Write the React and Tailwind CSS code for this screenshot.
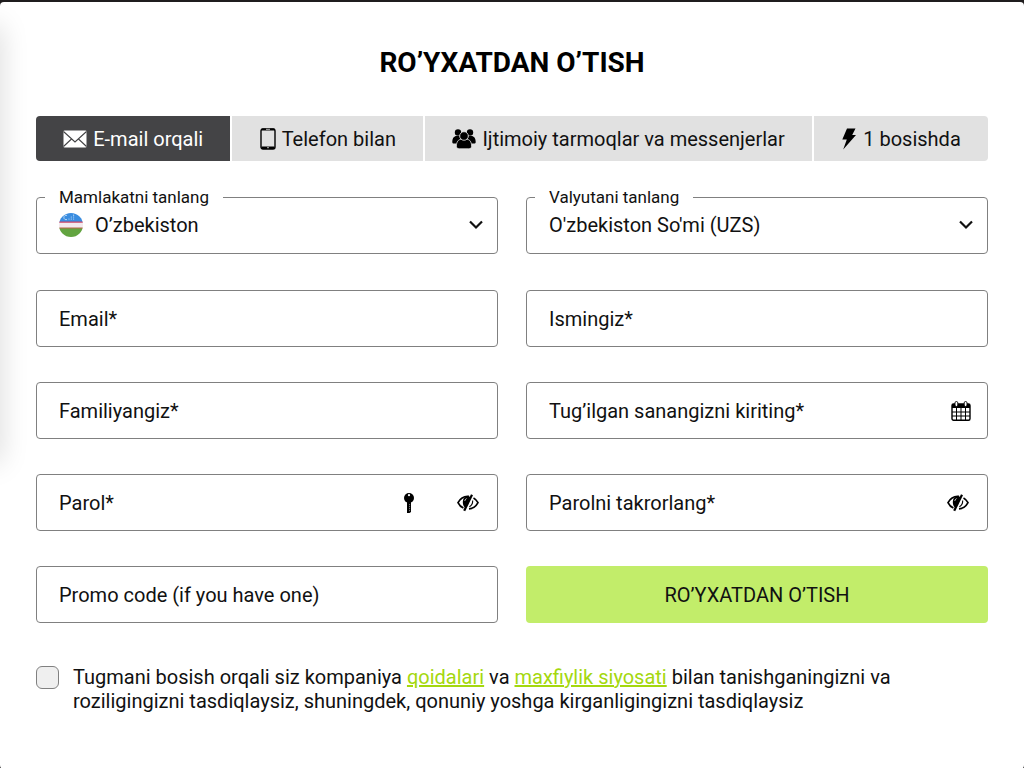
import React, { useState } from 'react';

const MailIcon = () => (
  <svg width="24" height="18" viewBox="0 0 24 18" aria-hidden="true">
    <rect x="0.5" y="0.5" width="23" height="17" rx="1" fill="#fff" />
    <path d="M0.5 1.5 12 12 23.5 1.5M0.5 16.5 8.5 9M23.5 16.5 15.5 9" fill="none" stroke="#444446" strokeWidth="1.1" />
  </svg>
);

const PhoneIcon = () => (
  <svg width="16" height="22" viewBox="0 0 16 22" aria-hidden="true">
    <rect x="1" y="1" width="14" height="20" rx="2" fill="none" stroke="#000" strokeWidth="1.4" />
    <path d="M1.5 1.6h13" stroke="#000" strokeWidth="2" />
    <path d="M1.5 19.8h13" stroke="#000" strokeWidth="2.6" />
    <path d="M6 1.3h4M7 19.7h2" stroke="#e1e1e1" strokeWidth="0.8" />
  </svg>
);

const PeopleIcon = () => (
  <svg width="24" height="20" viewBox="0 0 24 20" aria-hidden="true">
    <circle cx="6" cy="3.5" r="3.2" />
    <circle cx="18" cy="3.5" r="3.2" />
    <path d="M0.3 13c0-3.8 1.7-6 4.4-6h2.8l2 7.5H2C.9 14.5.3 14 .3 13ZM23.7 13c0-3.8-1.7-6-4.4-6h-2.8l-2 7.5H22c1.1 0 1.7-.5 1.7-1.5Z" />
    <g stroke="#e1e1e1" strokeWidth="0.8">
      <path d="M4.4 17.3c0-4.6 2-7 5-7h5.2c3 0 5 2.4 5 7 0 1.600-1.200 2.500-2.800 2.500H7.200c-1.600 0-2.800-.9-2.800-2.500Z" />
      <circle cx="12" cy="7" r="4.3" />
    </g>
  </svg>
);

const BoltIcon = () => (
  <svg width="16" height="22" viewBox="0 0 16 22" aria-hidden="true">
    <path d="M6 0.5h8.500L11.200 7H15L2.200 21.500 5.800 11.600H1.300L6 0.500Z" />
  </svg>
);

const UzFlag = () => (
  <svg width="24" height="24" viewBox="0 0 24 24" aria-hidden="true">
    <defs>
      <clipPath id="uz-circle">
        <circle cx="12" cy="12" r="12" />
      </clipPath>
    </defs>
    <g clipPath="url(#uz-circle)">
      <path fill="#3a8de0" d="M0 0h24v9H0z" />
      <path fill="#f3eaee" d="M0 9h24v6H0z" />
      <path fill="#62a440" d="M0 15h24v9H0z" />
      <path fill="#c84468" d="M0 8.500h24v1.200H0z" />
      <path fill="#b8664a" d="M0 14.500h24v1H0z" />
      <path d="M8 2.500a2.200 2.200 0 1 0 0 4" fill="none" stroke="#c4dff8" strokeWidth="0.9" />
      <g fill="#c4dff8">
        <circle cx="10" cy="6" r="0.6" />
        <circle cx="12.3" cy="6" r="0.6" />
        <circle cx="14.6" cy="6" r="0.6" />
        <circle cx="12.3" cy="4" r="0.6" />
        <circle cx="14.6" cy="4" r="0.6" />
        <circle cx="14.6" cy="2.2" r="0.6" />
      </g>
    </g>
  </svg>
);

const ChevronIcon = () => (
  <svg width="14" height="10" viewBox="0 0 14 10" aria-hidden="true" className="pointer-events-none -ml-7 mr-3.5 shrink-0">
    <path d="M1 1.5 7 7.5 13 1.5" fill="none" stroke="#111" strokeWidth="2.2" />
  </svg>
);

const CalendarIcon = () => (
  <svg width="20" height="20" viewBox="0 0 20 20" aria-hidden="true">
    <rect x="1" y="3" width="18" height="16.3" rx="1.5" fill="#fff" stroke="#000" strokeWidth="1.4" />
    <path d="M1 3h18v4H1z" />
    <path d="M1 11h18M1 15h18M5.5 7v12M10 7v12M14.5 7v12" stroke="#000" strokeWidth="1" />
    <rect x="4" y="0.5" width="2.8" height="5" rx="1.4" fill="#fff" stroke="#000" strokeWidth="0.9" />
    <rect x="13.2" y="0.5" width="2.8" height="5" rx="1.4" fill="#fff" stroke="#000" strokeWidth="0.9" />
  </svg>
);

const KeyIcon = () => (
  <svg width="12" height="22" viewBox="0 0 12 22" aria-hidden="true">
    <circle cx="6" cy="6" r="5" />
    <circle cx="6" cy="3.2" r="1.1" fill="#fff" />
    <path d="M4 9h4v11L6.500 21H4z" />
    <path d="M6.600 12v8" stroke="#fff" strokeWidth="0.5" strokeDasharray="1.2 0.8" />
  </svg>
);

const EyeOffIcon = () => (
  <svg width="22" height="18" viewBox="0 0 22 18" aria-hidden="true">
    <path d="M12 2.4C6.800 1.800 3 5 1 8.600c1.200 2.500 3 4.400 5.400 5.500M16.500 4c1.900 1.100 3.400 2.700 4.500 4.700-2 3.700-5 6-9 6.200" fill="none" stroke="#000" strokeWidth="1.7" />
    <path d="M15 0.800 7.200 16.800" stroke="#000" strokeWidth="2.200" />
    <path d="M13.500 3 8.300 14C5.600 12 5 7 7 3.800c2-1.400 4-1.500 6.500-.8Z" />
    <path d="M7.800 6.800c.2-1 .8-1.800 1.700-2.200" fill="none" stroke="#fff" strokeWidth="0.9" />
    <path d="M15.700 6.500c.1 2.800-1.100 5-3.300 6.300" fill="none" stroke="#000" strokeWidth="1.1" />
  </svg>
);

const tabs = [
  { id: 'email', label: 'E-mail orqali', Icon: MailIcon },
  { id: 'phone', label: 'Telefon bilan', Icon: PhoneIcon },
  { id: 'social', label: 'Ijtimoiy tarmoqlar va messenjerlar', Icon: PeopleIcon },
  { id: 'click', label: '1 bosishda', Icon: BoltIcon },
];

const SelectField = ({ id, label, icon, options }) => (
  <fieldset className="min-w-0 rounded border border-[#808080] pl-[22px]">
    <legend className="-ml-[14px] px-[14px] text-[17px] leading-6">
      <label htmlFor={id}>{label}</label>
    </legend>
    <div className="flex h-11 items-center pb-3">
      {icon}
      <select
        id={id}
        className={`h-8 min-w-0 flex-1 appearance-none bg-transparent outline-none ${icon ? 'pl-3' : ''}`}
      >
        {options.map((option) => (
          <option key={option}>{option}</option>
        ))}
      </select>
      <ChevronIcon />
    </div>
  </fieldset>
);

const TextField = ({ label, type = 'text', children }) => (
  <div className="flex h-[57px] items-center rounded border border-[#808080] pl-[22px] pr-4">
    <input
      type={type}
      aria-label={label}
      placeholder={label}
      className="h-full min-w-0 flex-1 bg-transparent outline-none placeholder:text-[#111]"
    />
    {children}
  </div>
);

const EyeButton = () => (
  <button type="button" aria-label="Parolni ko‘rsatish" className="mr-0.5 cursor-pointer">
    <EyeOffIcon />
  </button>
);

export default function App() {
  const [activeTab, setActiveTab] = useState('email');
  const [agreed, setAgreed] = useState(false);

  return (
    <div className="min-h-screen bg-[#1f1d1e] pt-0.5 font-['Roboto',sans-serif] text-xl text-[#111]">
      <main className="relative min-h-[calc(100vh-2px)] overflow-hidden rounded bg-white px-9 pb-14 pt-10">
        <div className="pointer-events-none absolute -left-5 top-6 h-[436px] w-5 shadow-[0_0_28px_rgba(0,0,0,0.17)]" />
        <h1 className="text-center text-[28px] font-bold leading-[42px] text-black">RO’YXATDAN O’TISH</h1>

        <div role="tablist" className="mt-8 flex gap-0.5 overflow-hidden rounded">
          {tabs.map(({ id, label, Icon }) => (
            <button
              key={id}
              type="button"
              role="tab"
              aria-selected={activeTab === id}
              onClick={() => setActiveTab(id)}
              className={`flex h-[45px] flex-auto cursor-pointer items-center justify-center gap-1.5 whitespace-nowrap ${
                activeTab === id ? 'bg-[#444446] text-white' : 'bg-[#e1e1e1]'
              }`}
            >
              <Icon />
              {label}
            </button>
          ))}
        </div>

        <form onSubmit={(e) => e.preventDefault()}>
          <div className="mt-6 grid grid-cols-2 gap-7">
            <SelectField id="country" label="Mamlakatni tanlang" icon={<UzFlag />} options={['O’zbekiston']} />
            <SelectField id="currency" label="Valyutani tanlang" options={["O'zbekiston So'mi (UZS)"]} />
          </div>

          <div className="mt-9 grid grid-cols-2 gap-x-7 gap-y-[35px]">
            <TextField label="Email*" type="email" />
            <TextField label="Ismingiz*" />
            <TextField label="Familiyangiz*" />
            <TextField label="Tug’ilgan sanangizni kiriting*">
              <button type="button" aria-label="Sana" className="cursor-pointer">
                <CalendarIcon />
              </button>
            </TextField>
            <TextField label="Parol*" type="password">
              <div className="flex items-center gap-[42px]">
                <button type="button" aria-label="Parol yaratish" className="cursor-pointer">
                  <KeyIcon />
                </button>
                <EyeButton />
              </div>
            </TextField>
            <TextField label="Parolni takrorlang*" type="password">
              <EyeButton />
            </TextField>
            <TextField label="Promo code (if you have one)" />
            <button type="submit" className="h-[57px] cursor-pointer rounded bg-[#c2ed6a]">
              RO’YXATDAN O’TISH
            </button>
          </div>

          <div className="mt-[42px] flex items-start gap-3.5">
            <input
              id="agree"
              type="checkbox"
              checked={agreed}
              onChange={(e) => setAgreed(e.target.checked)}
              className="mt-px size-[23px] shrink-0 appearance-none rounded-md border border-[#808080] bg-[#efefef] checked:bg-[#a4d80e]"
            />
            <label htmlFor="agree" className="max-w-[840px] leading-6">
              Tugmani bosish orqali siz kompaniya{' '}
              <a href="#rules" className="text-[#a4d80e] underline">qoidalari</a> va{' '}
              <a href="#privacy" className="text-[#a4d80e] underline">maxfiylik siyosati</a> bilan tanishganingizni va
              roziligingizni tasdiqlaysiz, shuningdek, qonuniy yoshga kirganligingizni tasdiqlaysiz
            </label>
          </div>
        </form>
      </main>
    </div>
  );
}
